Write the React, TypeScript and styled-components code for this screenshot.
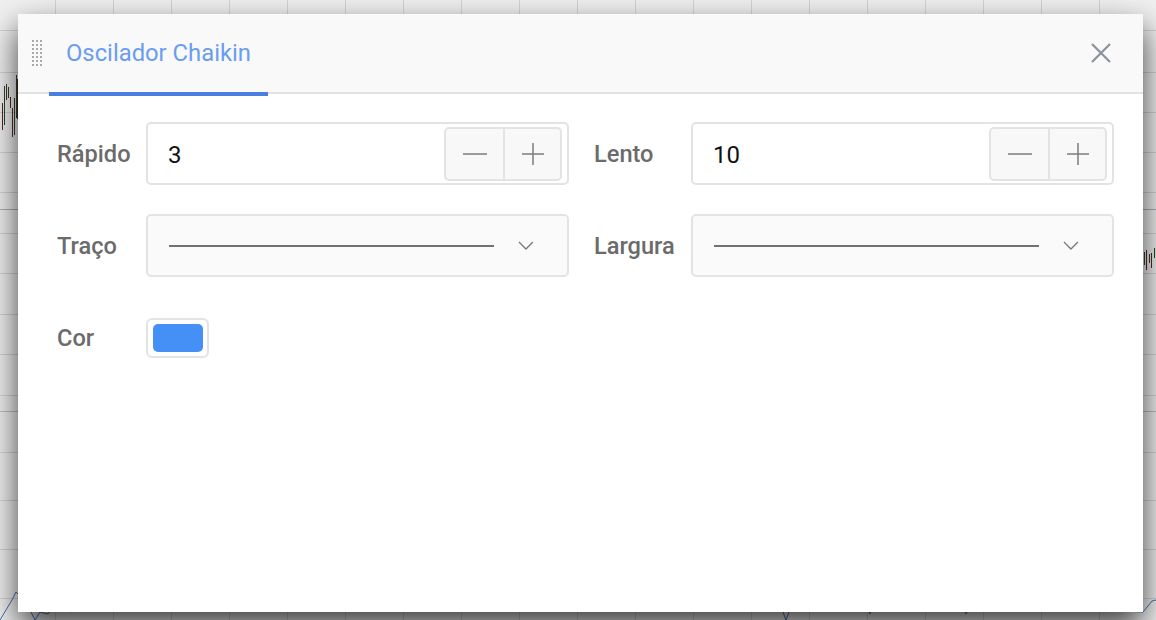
import styled, { createGlobalStyle } from "styled-components";

const GlobalStyle = createGlobalStyle`
  html, body {
    margin: 0;
    padding: 0;
    background: #fff;
    font-family: Roboto, "Liberation Sans", Arial, sans-serif;
  }
`;

const Stage = styled.div`
  position: relative;
  width: 1156px;
  height: 620px;
  overflow: hidden;
  background: #fff;
`;

const Chart = styled.svg`
  display: block;
`;

const Backdrop = styled.div`
  position: absolute;
  inset: 0;
  background: rgba(0, 0, 0, 0.06);
`;

const Dialog = styled.div`
  position: absolute;
  left: 18px;
  top: 14px;
  width: 1125px;
  height: 598px;
  background: #fff;
  box-shadow: 0 14px 30px rgba(0, 0, 0, 0.75);
  display: flex;
  flex-direction: column;
`;

const Header = styled.div`
  display: flex;
  align-items: stretch;
  height: 78px;
  padding: 0 32px 0 14px;
  background: #f9f9f9;
  border-bottom: 2px solid #e3e3e3;
`;

const Grip = styled.div`
  align-self: center;
  width: 11px;
  height: 27px;
  background-image: radial-gradient(circle, #a9a9a9 1.3px, transparent 1.5px);
  background-size: 4px 4px;
  background-position: -1px -1px;
`;

const Tab = styled.div`
  display: flex;
  align-items: center;
  margin: 0 0 -4px 6px;
  padding: 0 17px;
  font-size: 23.8px;
  color: #6a9cf1;
  border-bottom: 4px solid #4a7fe0;
`;

const CloseButton = styled.button`
  margin-left: auto;
  align-self: center;
  width: 20px;
  height: 20px;
  padding: 0;
  border: none;
  background: none;
  color: #8c939c;
  cursor: pointer;
  display: flex;
`;

const Body = styled.div`
  display: flex;
  gap: 25px;
  padding: 28px 29px 0 39px;
`;

const Column = styled.div<{ $labelWidth: number }>`
  display: grid;
  grid-template-columns: ${(p) => p.$labelWidth}px 423px;
  grid-auto-rows: 63px;
  row-gap: 29px;
  align-items: center;
`;

const Label = styled.label`
  padding-top: 1px;
  font-size: 23.6px;
  font-weight: 500;
  color: #6b6b6b;
`;

const NumberBox = styled.div`
  box-sizing: border-box;
  height: 63px;
  display: flex;
  align-items: center;
  padding: 0 5px 0 20px;
  border: 2px solid #e3e3e3;
  border-radius: 5px;
  background: #fff;
`;

const Value = styled.span`
  flex: 1;
  padding-top: 2px;
  font-size: 24px;
  color: #111;
`;

const Stepper = styled.div`
  display: flex;
  height: 50px;
  border: 2px solid #e3e3e3;
  border-radius: 5px;
  background: #f8f8f8;
  overflow: hidden;
`;

const StepButton = styled.button`
  width: 57px;
  padding: 0;
  border: none;
  background: none;
  color: #7d7d7d;
  display: flex;
  align-items: center;
  justify-content: center;
  & + & {
    border-left: 2px solid #e3e3e3;
  }
`;

const SelectBox = styled.div`
  box-sizing: border-box;
  height: 63px;
  display: flex;
  align-items: center;
  gap: 24px;
  padding: 0 33px 0 21px;
  border: 2px solid #e3e3e3;
  border-radius: 5px;
  background: #fafafa;
`;

const LineSample = styled.div`
  width: 327px;
  height: 2px;
  background: #717171;
`;

const Swatch = styled.div`
  box-sizing: border-box;
  width: 63px;
  height: 40px;
  padding: 4px 4px 4px 5px;
  border: 2px solid #e3e3e3;
  border-radius: 6px;
  background: #fff;
`;

const SwatchFill = styled.div<{ $color: string }>`
  height: 100%;
  border-radius: 5px;
  background: ${(p) => p.$color};
`;

function ChartBackground() {
  const vLines = Array.from({ length: 20 }, (_, i) => 55 + i * 58);
  const hLines = [30, 72, 112, 152, 192, 233, 273, 314, 354, 395, 452, 500, 549, 598];
  const candles = [
    [2, 103, 130, "#5a2a2a"],
    [4, 86, 125, "#2d4a2d"],
    [6, 84, 100, "#5a2a2a"],
    [8, 87, 98, "#2d4a2d"],
    [10, 97, 108, "#5a2a2a"],
    [12, 108, 137, "#5a2a2a"],
    [14, 98, 135, "#2d4a2d"],
    [16, 75, 118, "#2d4a2d"],
    [17, 79, 119, "#5a2a2a"],
    [1144, 252, 265, "#2d4a2d"],
    [1146, 250, 270, "#5a2a2a"],
    [1149, 254, 263, "#2d4a2d"],
    [1151, 253, 268, "#5a2a2a"],
    [1154, 248, 258, "#2d4a2d"],
  ] as const;
  return (
    <Chart width={1156} height={620} viewBox="0 0 1156 620">
      {vLines.map((x) => (
        <line key={`v${x}`} x1={x + 0.5} y1={0} x2={x + 0.5} y2={620} stroke="#e2e2e2" />
      ))}
      {hLines.map((y) => (
        <line key={`h${y}`} x1={0} y1={y + 0.5} x2={1156} y2={y + 0.5} stroke="#e2e2e2" />
      ))}
      <line x1={0} y1={209.5} x2={1156} y2={209.5} stroke="#b6bcc6" />
      <line x1={0} y1={411.5} x2={1156} y2={411.5} stroke="#c4ccd6" />
      {candles.map(([x, y1, y2, c], i) => (
        <line key={i} x1={x + 0.5} y1={y1} x2={x + 0.5} y2={y2} stroke={c} />
      ))}
      <polyline
        fill="none"
        stroke="#4a78c8"
        strokeWidth={1}
        points="0,620 6,610 12,600 16,592 20,596 28,606 35,620 40,612 48,614 60,600 64,608 72,612 84,600 92,605 104,598 112,612 120,604 130,598 780,604 786,620 792,604 800,606 866,600 870,614 874,604 960,602 966,614 972,604 1143,612 1148,606 1152,601 1156,600"
      />
    </Chart>
  );
}

function Minus() {
  return (
    <svg width="26" height="26" viewBox="0 0 26 26">
      <line x1="1" y1="13" x2="25" y2="13" stroke="currentColor" strokeWidth="1.5" />
    </svg>
  );
}

function Plus() {
  return (
    <svg width="26" height="26" viewBox="0 0 26 26">
      <line x1="2" y1="13" x2="24" y2="13" stroke="currentColor" strokeWidth="1.5" />
      <line x1="13" y1="2" x2="13" y2="24" stroke="currentColor" strokeWidth="1.5" />
    </svg>
  );
}

function Chevron() {
  return (
    <svg width="16" height="9" viewBox="0 0 16 9">
      <polyline points="1,1 8,8 15,1" fill="none" stroke="#7a7a7a" strokeWidth="1.3" />
    </svg>
  );
}

function NumberField({ value }: { value: number }) {
  return (
    <NumberBox>
      <Value>{value}</Value>
      <Stepper>
        <StepButton aria-label="diminuir">
          <Minus />
        </StepButton>
        <StepButton aria-label="aumentar">
          <Plus />
        </StepButton>
      </Stepper>
    </NumberBox>
  );
}

function LineSelect() {
  return (
    <SelectBox>
      <LineSample />
      <Chevron />
    </SelectBox>
  );
}

export default function App() {
  return (
    <>
      <GlobalStyle />
      <Stage>
        <ChartBackground />
        <Backdrop />
        <Dialog>
          <Header>
            <Grip />
            <Tab>Oscilador Chaikin</Tab>
            <CloseButton aria-label="fechar">
              <svg width="20" height="20" viewBox="0 0 20 20">
                <path d="M1 1 L19 19 M19 1 L1 19" stroke="currentColor" strokeWidth="2.2" />
              </svg>
            </CloseButton>
          </Header>
          <Body>
            <Column $labelWidth={89}>
              <Label>Rápido</Label>
              <NumberField value={3} />
              <Label>Traço</Label>
              <LineSelect />
              <Label>Cor</Label>
              <Swatch>
                <SwatchFill $color="#4590f6" />
              </Swatch>
            </Column>
            <Column $labelWidth={97}>
              <Label>Lento</Label>
              <NumberField value={10} />
              <Label>Largura</Label>
              <LineSelect />
            </Column>
          </Body>
        </Dialog>
      </Stage>
    </>
  );
}
